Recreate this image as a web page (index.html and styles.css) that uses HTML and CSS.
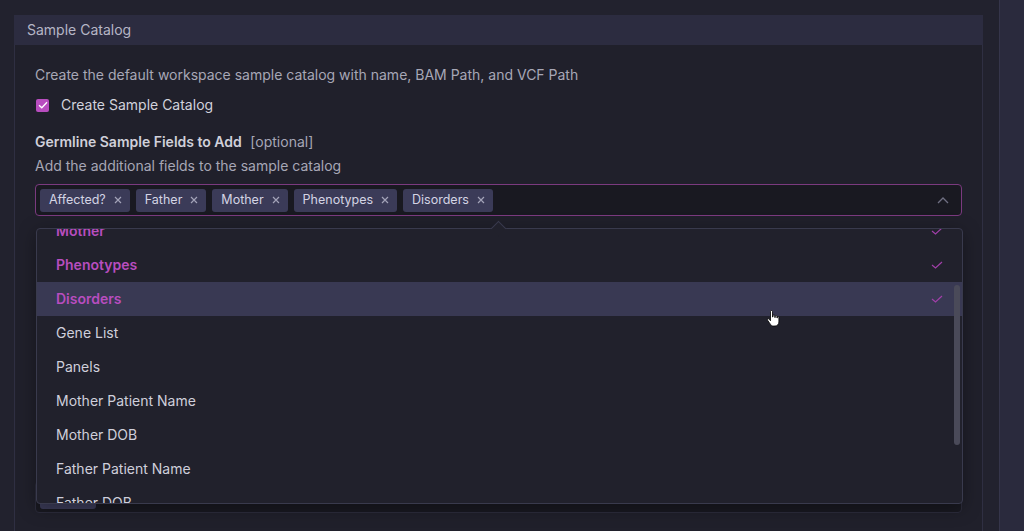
FILE: index.html
```html
<!DOCTYPE html>
<html lang="en">
<head>
  <meta charset="UTF-8">
  <meta name="viewport" content="width=device-width, initial-scale=1.0">
  <title>Sample Catalog</title>
  <link rel="stylesheet" href="styles.css">
</head>
<body>

  <div class="page">

    <!-- Sample Catalog panel -->
    <section class="panel">
      <div class="panel-head">Sample Catalog</div>
      <div class="panel-body">
        <p class="desc">Create the default workspace sample catalog with name, BAM Path, and VCF Path</p>

        <label class="check">
          <span class="box">
            <svg width="10" height="8" viewBox="0 0 10 8"><path d="M1 4.2 3.8 6.8 9 1.2" fill="none" stroke="#fff" stroke-width="1.3"/></svg>
          </span>
          Create Sample Catalog
        </label>

        <div class="field">
          <div class="field-label">Germline Sample Fields to Add <span class="opt">[optional]</span></div>
          <div class="field-help">Add the additional fields to the sample catalog</div>

          <div class="select">
            <div class="select-box">
              <span class="tag">Affected? <svg class="x" width="8" height="8" viewBox="0 0 8 8"><path d="M1 1 7 7M7 1 1 7"/></svg></span>
              <span class="tag">Father <svg class="x" width="8" height="8" viewBox="0 0 8 8"><path d="M1 1 7 7M7 1 1 7"/></svg></span>
              <span class="tag">Mother <svg class="x" width="8" height="8" viewBox="0 0 8 8"><path d="M1 1 7 7M7 1 1 7"/></svg></span>
              <span class="tag">Phenotypes <svg class="x" width="8" height="8" viewBox="0 0 8 8"><path d="M1 1 7 7M7 1 1 7"/></svg></span>
              <span class="tag">Disorders <svg class="x" width="8" height="8" viewBox="0 0 8 8"><path d="M1 1 7 7M7 1 1 7"/></svg></span>
              <svg class="chevron" width="12" height="7" viewBox="0 0 12 7"><path d="M1 6 6 1 11 6"/></svg>
            </div>

            <div class="menu">
              <span class="menu-arrow"></span>
              <ul class="menu-list">
                <li class="selected">Mother <svg class="tick" width="12" height="8" viewBox="0 0 12 8"><path d="M1 4 4.5 7 11 1"/></svg></li>
                <li class="selected">Phenotypes <svg class="tick" width="12" height="8" viewBox="0 0 12 8"><path d="M1 4 4.5 7 11 1"/></svg></li>
                <li class="selected hover">Disorders <svg class="tick" width="12" height="8" viewBox="0 0 12 8"><path d="M1 4 4.5 7 11 1"/></svg></li>
                <li>Gene List</li>
                <li>Panels</li>
                <li>Mother Patient Name</li>
                <li>Mother DOB</li>
                <li>Father Patient Name</li>
                <li>Father DOB</li>
              </ul>
              <span class="scrollbar"></span>
            </div>
          </div>
        </div>

        <!-- next field, mostly hidden under the open menu -->
        <div class="select-box plain">
          <span class="tag tag-empty"></span>
        </div>
      </div>
    </section>

    <aside class="side"></aside>

    <svg class="cursor" width="14" height="18" viewBox="0 0 14 18"><path d="M4.5 1.5c0-.6.4-1 1-1s1 .4 1 1V7h.5V5.8c0-.5.4-.9.9-.9s.9.4.9.9V7.5h.4V6.5c0-.5.4-.9.9-.9s.9.4.9.9V8h.3V7.3c0-.5.4-.8.8-.8s.8.3.8.8V12c0 2.2-1.6 4-3.8 4H7.4c-1.3 0-2.2-.6-2.9-1.6L1.6 10.2c-.3-.5-.2-1 .2-1.3.4-.3 1-.2 1.3.2l1.4 1.7z" fill="#fff" stroke="#000" stroke-width=".8"/></svg>
  </div>

</body>
</html>
```

FILE: styles.css
```css
:root {
  --color-bg: #22222e;
  --color-panel: #20202b;
  --color-head: #2c2c40;
  --color-border: #2f2f42;
  --color-input: #191921;
  --color-accent: #b84dbf;
  --color-accent-dim: #a03fa8;
  --color-text: #d2d2dc;
  --color-muted: #a7a7b6;
  --color-tag: #3b3b58;
  --radius: 4px;
}

*, *::before, *::after {
  margin: 0; padding: 0; box-sizing: border-box;
}
html, body {
  height: 100%;
  overflow: hidden;
}
body {
  font-family: Inter, "Noto Sans", sans-serif;
  font-size: 14px;
  line-height: 20px;
  color: var(--color-text);
  background: var(--color-bg);
}

.page {
  position: relative;
  display: grid;
  grid-template-columns: 969px 1fr;
  gap: 16px;
  padding: 15px 0 0 14px;
  height: 100%;
}

.panel {
  border: 1px solid var(--color-border);
  border-top: none;
  border-bottom: none;
  background: var(--color-panel);
}
.panel-head {
  height: 30px;
  line-height: 30px;
  padding: 0 13px;
  margin: 0 -1px;
  background: var(--color-head);
  color: #b6b6c6;
}
.panel-body {
  padding: 20px 20px 0;
}

.desc {
  color: var(--color-muted);
}

.check {
  display: flex;
  align-items: center;
  gap: 12px;
  margin-top: 10px;
  padding-left: 1px;
  cursor: pointer;
}
.check .box {
  width: 13px;
  height: 13px;
  border-radius: 2px;
  background: var(--color-accent);
  display: flex;
  align-items: center;
  justify-content: center;
}

.field {
  margin-top: 17px;
}
.field-label {
  font-weight: 600;
  color: #d0d0da;
}
.field-label .opt {
  font-weight: 400;
  color: var(--color-muted);
  margin-left: 5px;
}
.field-help {
  margin-top: 4px;
  color: var(--color-muted);
}

.select {
  position: relative;
  margin-top: 8px;
}
.select-box {
  display: flex;
  align-items: center;
  gap: 6px;
  height: 32px;
  padding: 0 4px;
  background: var(--color-input);
  border: 1px solid #7b3a7f;
  border-radius: var(--radius);
}
.select-box.plain {
  margin-top: 265px;
  border-color: #2c2c3c;
}
.tag {
  display: inline-flex;
  align-items: center;
  gap: 8px;
  height: 23px;
  padding: 0 8px 0 9px;
  font-size: 12.5px;
  color: #d4d4e4;
  background: var(--color-tag);
  border-radius: 3px;
}
.tag-empty {
  width: 56px;
}
.tag .x path {
  stroke: #a3a3b8;
  stroke-width: 1.2;
}
.chevron {
  margin-left: auto;
  margin-right: 8px;
}
.chevron path {
  fill: none;
  stroke: #6f6f82;
  stroke-width: 1.3;
}

/* dropdown menu over the form */
.menu {
  position: absolute;
  top: 44px;
  left: 1px;
  width: 100%;
  height: 276px;
  background: #21212c;
  border: 1px solid #393a4d;
  border-radius: var(--radius);
  box-shadow: 0 4px 18px rgba(0,0,0,0.35);
  z-index: 2;
}
.menu-arrow {
  position: absolute;
  top: -6px;
  left: 456px;
  width: 11px;
  height: 11px;
  background: #21212c;
  border-top: 1px solid #393a4d;
  border-left: 1px solid #393a4d;
  transform: rotate(45deg);
}
.menu-list {
  list-style: none;
  height: 100%;
  overflow: hidden;
  border-radius: var(--radius);
}
.menu-list li {
  display: flex;
  align-items: center;
  justify-content: space-between;
  height: 34px;
  padding: 0 19px;
  color: #cfcfdb;
}
.menu-list li:first-child {
  margin-top: -15px;
}
.menu-list li.selected {
  color: var(--color-accent);
  font-weight: 600;
}
.menu-list li.hover {
  background: #393953;
}
.tick path {
  fill: none;
  stroke: var(--color-accent-dim);
  stroke-width: 1.2;
}
.scrollbar {
  position: absolute;
  top: 56px;
  right: 2px;
  width: 6px;
  height: 160px;
  border-radius: 3px;
  background: #4a4a59;
}

.side {
  background: #2a2a3d;
  border-left: 1px solid #35354a;
  margin-top: -15px;
}

.cursor {
  position: absolute;
  left: 766px;
  top: 310px;
  z-index: 3;
}
```
